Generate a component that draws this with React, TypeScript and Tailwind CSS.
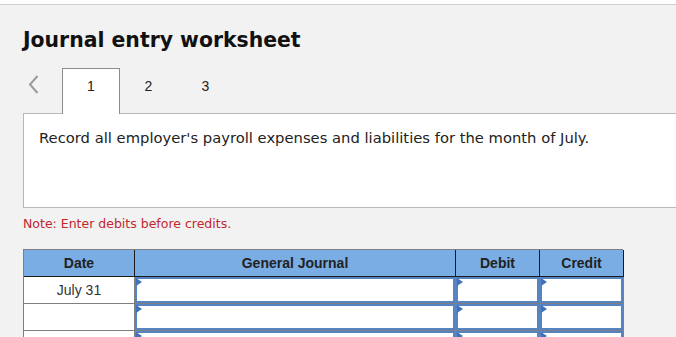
import React from 'react';

const rows = [{ date: 'July 31' }, { date: '' }, { date: '' }];

function InputCell() {
  return (
    <div className="relative h-full border-b border-r border-[#7f7f7f] bg-[#dfe7f1]">
      <div className="h-full border-2 border-[#5683c2] bg-white"></div>
      {/* dropdown marker */}
      <span className="absolute left-[1px] top-[1px] h-0 w-0 border-y-[4px] border-l-[6px] border-y-transparent border-l-[#3f72b8]"></span>
    </div>
  );
}

export default function App() {
  return (
    <div className="h-[337px] w-[676px] overflow-hidden bg-white">
      <div className="mt-[4px] h-[333px] border-t border-[#d0d0d0] bg-[#f2f2f2] pl-[23px] font-['DejaVu_Sans',sans-serif]">
        <h1 className="pt-[23px] text-[20.4px] font-bold leading-[24px] text-[#111]">Journal entry worksheet</h1>

        {/* Tabs */}
        <div className="mt-[16px] flex h-[46px] items-start font-['Liberation_Sans',Arial,sans-serif] text-[14px] text-[#222]">
          <div className="flex h-[32px] w-[39px] items-center justify-start pl-[5px]">
            <svg width="11" height="19" viewBox="0 0 11 19">
              <polyline points="9.5,1 2,9.5 9.5,18" fill="none" stroke="#9a9a9a" strokeWidth="2" />
            </svg>
          </div>
          <div className="relative z-10 h-[46px] w-[58px] border border-b-0 border-[#8c8c8c] bg-white pt-[7px] text-center">1</div>
          <div className="w-[57px] pt-[8px] text-center">2</div>
          <div className="w-[57px] pt-[8px] text-center">3</div>
        </div>

        {/* Question box */}
        <div className="-mt-[1px] h-[95px] border border-r-0 border-[#b8b8b8] bg-white pl-[15px] pt-[15px] text-[14.75px] leading-[17px] text-[#222]">
          Record all employer's payroll expenses and liabilities for the month of July.
        </div>

        <p className="mt-[8px] text-[12.5px] leading-[16px] text-[#c1272d]">Note: Enter debits before credits.</p>

        {/* Journal table */}
        <div className="mt-[17px] grid w-[600px] grid-cols-[111px_321px_84px_84px] auto-rows-[27px] border-l border-t border-[#7f7f7f] font-['Liberation_Sans',Arial,sans-serif] text-[14px]">
          <div className="flex items-center justify-center border-b border-r border-[#1a1a1a] bg-[#7bade5] font-bold text-[#222]">Date</div>
          <div className="flex items-center justify-center border-b border-r border-[#1a1a1a] bg-[#7bade5] font-bold text-[#222]">General Journal</div>
          <div className="flex items-center justify-center border-b border-r border-[#1a1a1a] bg-[#7bade5] font-bold text-[#222]">Debit</div>
          <div className="flex items-center justify-center border-b border-r border-[#1a1a1a] bg-[#7bade5] font-bold text-[#222]">Credit</div>
          {rows.map((r, i) => (
            <React.Fragment key={i}>
              <div className="flex items-center justify-center border-b border-r border-[#7f7f7f] bg-white text-[#333]">{r.date}</div>
              <InputCell />
              <InputCell />
              <InputCell />
            </React.Fragment>
          ))}
        </div>
      </div>
    </div>
  );
}
